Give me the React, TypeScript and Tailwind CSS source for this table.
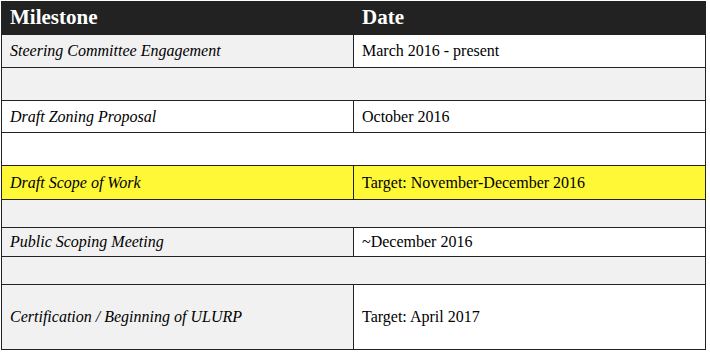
const rows = [
  { name: "Steering Committee Engagement", date: "March 2016 - present", h: "h-[33px]", left: "bg-[#f1f1f1]", right: "bg-white" },
  { gap: true, h: "h-[33px]", bg: "bg-[#f1f1f1]" },
  { name: "Draft Zoning Proposal", date: "October 2016", h: "h-[32px]", left: "bg-white", right: "bg-white" },
  { gap: true, h: "h-[33px]", bg: "bg-white" },
  { name: "Draft Scope of Work", date: "Target: November-December 2016", h: "h-[34px]", left: "bg-[#fff836]", right: "bg-[#fff836]" },
  { gap: true, h: "h-[28px]", bg: "bg-[#f1f1f1]" },
  { name: "Public Scoping Meeting", date: "~December 2016", h: "h-[29px]", left: "bg-[#f1f1f1]", right: "bg-white" },
  { gap: true, h: "h-[28px]", bg: "bg-[#f1f1f1]" },
  { name: "Certification / Beginning of ULURP", date: "Target: April 2017", h: "h-[65px]", left: "bg-[#f1f1f1]", right: "bg-white" },
];

export default function App() {
  return (
    <div className="w-[710px] h-[352px] bg-white pl-px pt-px font-['Liberation_Serif',serif]">
      <table className="w-[705px] border-collapse border border-[#222] font-['Liberation_Serif',serif] text-[16px] text-black">
        <thead>
          <tr className="h-[33px] bg-[#222]">
            <th className="w-[352px] border border-[#222] px-2 text-left text-[21px] font-bold text-white">Milestone</th>
            <th className="border border-[#222] px-2 text-left text-[21px] font-bold text-white">Date</th>
          </tr>
        </thead>
        <tbody>
          {rows.map((r, i) =>
            r.gap ? (
              <tr key={i} className={r.h}>
                <td colSpan={2} className={`border border-[#222] ${r.bg}`}></td>
              </tr>
            ) : (
              <tr key={i} className={r.h}>
                <td className={`border border-[#222] px-2 italic ${r.left}`}>{r.name}</td>
                <td className={`border border-[#222] px-2 ${r.right}`}>{r.date}</td>
              </tr>
            )
          )}
        </tbody>
      </table>
    </div>
  );
}
